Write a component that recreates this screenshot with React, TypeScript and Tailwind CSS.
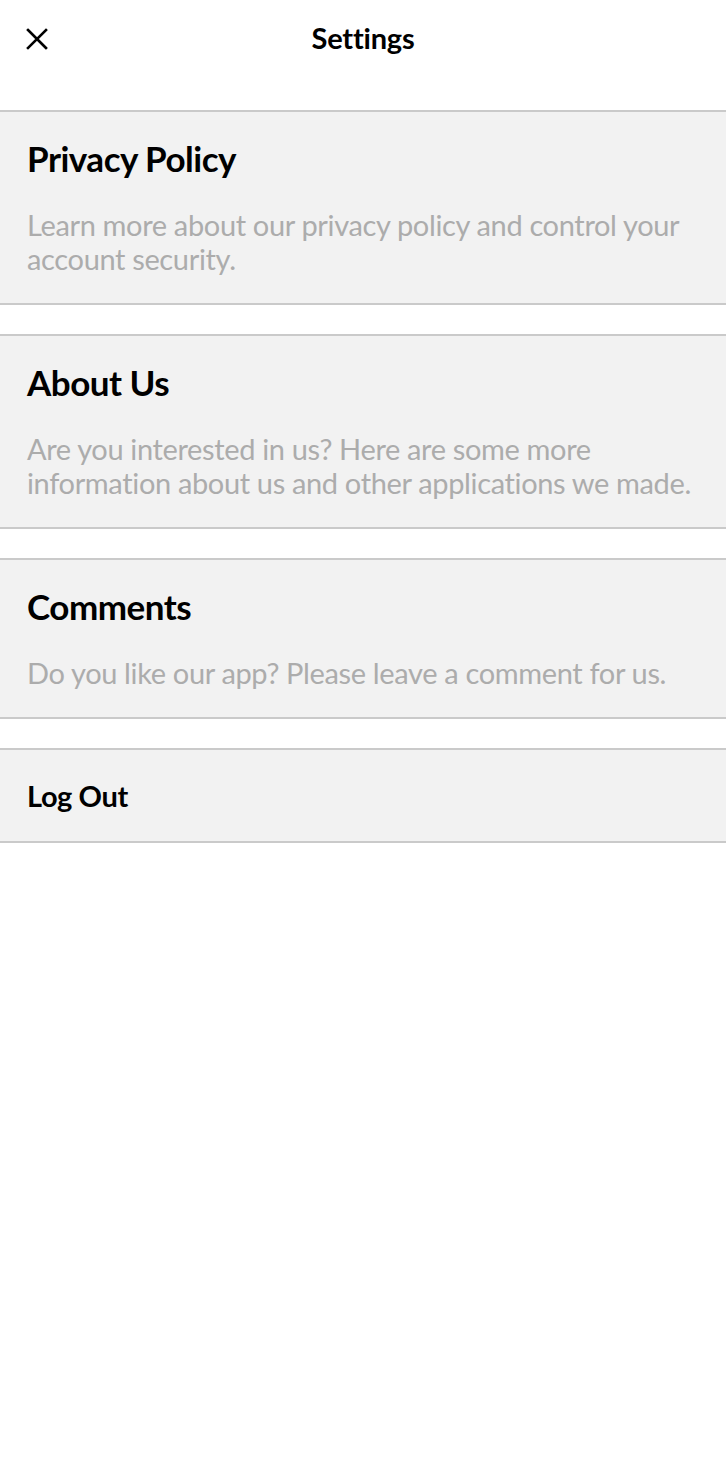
import React from "react";

// 설정 항목
interface SettingItem {
    title: string;
    description: string;
}

const items: SettingItem[] = [
    {
        title: "Privacy Policy",
        description: "Learn more about our privacy policy and control your account security."
    },
    {
        title: "About Us",
        description: "Are you interested in us? Here are some more information about us and other applications we made."
    },
    {
        title: "Comments",
        description: "Do you like our app? Please leave a comment for us."
    }
];

const CloseIcon = () => (
    <svg width="22" height="22" viewBox="0 0 22 22" fill="none" stroke="#000" strokeWidth="2.6" strokeLinecap="square">
        <path d="M2 2L20 20M20 2L2 20" />
    </svg>
);

export default function App() {
    return (
        <div className="w-full min-h-[1458px] bg-white text-black" style={{ fontFamily: "Lato, 'Open Sans', sans-serif" }}>
            {/* 헤더 */}
            <div className="relative h-[110px] flex justify-center pt-[20px]">
                <button className="absolute left-[26px] top-[28px]">
                    <CloseIcon />
                </button>
                <h1 className="text-[29px] leading-[36px] font-bold tracking-[-0.2px]">Settings</h1>
            </div>

            <div className="flex flex-col gap-[29px]">
                {items.map((item) => (
                    <div key={item.title} className="bg-[#f2f2f2] border-y-2 border-[#cacaca] px-[27px] pt-[26px] pb-[27px]">
                        <h2 className="text-[35px] leading-[40px] font-bold tracking-[-0.5px]">{item.title}</h2>
                        <p className="mt-[30px] text-[29px] leading-[34px] text-[#acacac] tracking-[-0.35px]">{item.description}</p>
                    </div>
                ))}
                <div className="bg-[#f2f2f2] border-y-2 border-[#cacaca] px-[27px] h-[95px] flex items-center">
                    <span className="text-[29px] leading-[34px] font-bold tracking-[-0.4px]">Log Out</span>
                </div>
            </div>
        </div>
    );
}
